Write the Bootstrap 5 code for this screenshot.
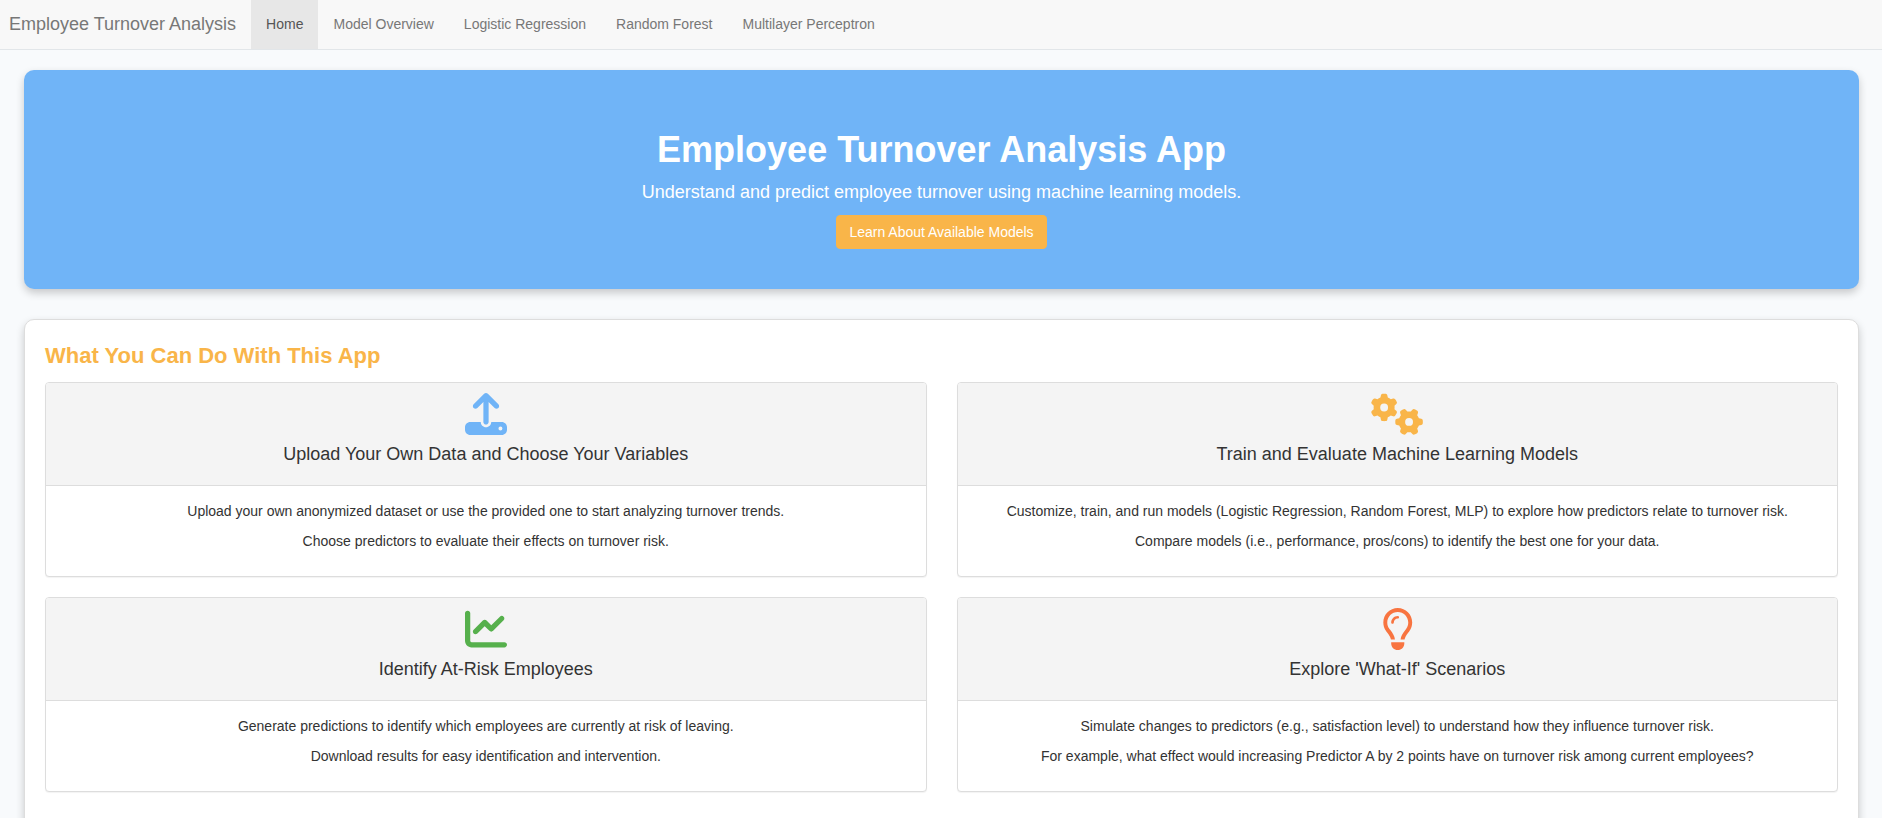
<!DOCTYPE html>
<html lang="en">
<head>
<meta charset="utf-8">
<meta name="viewport" content="width=device-width, initial-scale=1">
<title>Employee Turnover Analysis</title>
<link href="https://cdn.jsdelivr.net/npm/bootstrap@5.3.0/dist/css/bootstrap.min.css" rel="stylesheet">
<style>
  body { font-family: "Liberation Sans", Arial, sans-serif; font-size: 14px; line-height: 20px; color: #333; background: #f8fafc; }
  .topbar { background: #f8f8f8; border-bottom: 1px solid #e2e6e9; }
  .topbar .navbar-brand { font-size: 18px; line-height: 20px; color: #777; padding: 14px 15px 15px 9px; margin: 0; }
  .topbar .navbar-nav .nav-link { color: #777; padding: 14px 15px 15px; }
  .topbar .navbar-nav .nav-link.active { color: #555; background: #e7e7e7; }
  .page { padding: 20px 23px 20px 24px; }
  .hero { background: #70b4f7; border-radius: 10px; padding: 60px 20px 40px; margin-bottom: 30px; box-shadow: 0 4px 8px rgba(0,0,0,.2); }
  .hero h1 { font-size: 36px; line-height: 40px; font-weight: 700; margin-bottom: 10px; }
  .hero p { font-size: 18px; line-height: 25px; margin-bottom: 10px; }
  .btn-models { --bs-btn-font-size: 14px; --bs-btn-line-height: 20px; --bs-btn-padding-x: 12px; --bs-btn-border-radius: 4px; --bs-btn-color: #fff; --bs-btn-bg: #f9b549; --bs-btn-border-color: #f9b549; --bs-btn-hover-color: #fff; --bs-btn-hover-bg: #eba231; --bs-btn-hover-border-color: #eba231; }
  .features { border: 1px solid #ddd; border-radius: 10px; padding: 20px 20px 40px; box-shadow: 0 4px 8px rgba(0,0,0,.2); }
  .features h2 { font-size: 22px; line-height: 32px; font-weight: 700; color: #f9b549; margin-bottom: 10px; }
  .feature-row { --bs-gutter-x: 30px; --bs-gutter-y: 20px; }
  .feature { --bs-card-border-color: #ddd; --bs-card-border-radius: 4px; --bs-card-inner-border-radius: 3px; --bs-card-cap-bg: #f4f4f4; --bs-card-cap-padding-y: 10px; --bs-card-cap-padding-x: 15px; --bs-card-spacer-y: 15px; --bs-card-spacer-x: 15px; --bs-card-color: #333; box-shadow: 0 1px 1px rgba(0,0,0,.05); }
  .feature svg { height: 42px; fill: currentColor; }
  .feature h3 { font-size: 18px; line-height: 18px; font-weight: 400; margin: 10px 0 12px; color: #333; }
  .feature p { margin-bottom: 10px; }
  .tone-blue { color: #70b4f7; }
  .tone-amber { color: #f9b549; }
  .tone-green { color: #56b04c; }
  .tone-orange { color: #f87440; }
</style>
</head>
<body>
<nav class="navbar navbar-expand-md topbar p-0" aria-label="Main">
  <a class="navbar-brand" href="#">Employee Turnover Analysis</a>
  <div class="navbar-nav flex-row flex-wrap">
    <a class="nav-link active" aria-current="page" href="#">Home</a>
    <a class="nav-link" href="#models">Model Overview</a>
    <a class="nav-link" href="#logistic">Logistic Regression</a>
    <a class="nav-link" href="#forest">Random Forest</a>
    <a class="nav-link" href="#mlp">Multilayer Perceptron</a>
  </div>
</nav>

<main class="page">
  <header class="hero text-center text-white">
    <h1>Employee Turnover Analysis App</h1>
    <p>Understand and predict employee turnover using machine learning models.</p>
    <button type="button" class="btn btn-models">Learn About Available Models</button>
  </header>

  <section class="features bg-white">
    <h2>What You Can Do With This App</h2>
    <div class="row feature-row">
      <div class="col-md-6">
        <article class="card feature text-center">
          <div class="card-header">
            <svg class="d-block mx-auto tone-blue" viewBox="0 0 512 512" aria-hidden="true"><path d="M288 109.3V352c0 17.7-14.3 32-32 32s-32-14.3-32-32V109.3l-73.4 73.4c-12.5 12.5-32.8 12.5-45.3 0s-12.5-32.8 0-45.3l128-128c12.5-12.5 32.8-12.5 45.3 0l128 128c12.5 12.5 12.5 32.8 0 45.3s-32.8 12.5-45.3 0L288 109.3zM64 352H192c0 35.3 28.7 64 64 64s64-28.7 64-64H448c35.3 0 64 28.7 64 64v32c0 35.3-28.7 64-64 64H64c-35.3 0-64-28.7-64-64V416c0-35.3 28.7-64 64-64zM432 456a24 24 0 1 0 0-48 24 24 0 1 0 0 48z"/></svg>
            <h3>Upload Your Own Data and Choose Your Variables</h3>
          </div>
          <div class="card-body">
            <p>Upload your own anonymized dataset or use the provided one to start analyzing turnover trends.</p>
            <p>Choose predictors to evaluate their effects on turnover risk.</p>
          </div>
        </article>
      </div>
      <div class="col-md-6">
        <article class="card feature text-center">
          <div class="card-header">
            <svg class="d-block mx-auto tone-amber" viewBox="0 0 640 512" aria-hidden="true"><path d="M308.5 135.3c7.1-6.3 9.9-16.2 6.2-25c-2.3-5.3-4.8-10.5-7.6-15.5L304 89.4c-3-5-6.3-9.9-9.8-14.6c-5.7-7.6-15.7-10.1-24.7-7.1l-28.2 9.3c-10.7-8.8-23-16-36.2-20.9L199 27.1c-1.9-9.3-9.1-16.7-18.5-17.8C173.9 8.4 167.2 8 160.4 8h-.7c-6.8 0-13.5 .4-20.1 1.2c-9.4 1.1-16.6 8.6-18.5 17.8L115 56.1c-13.3 5-25.5 12.1-36.2 20.9L50.5 67.8c-9-3-19-.5-24.7 7.1c-3.5 4.7-6.8 9.6-9.9 14.6l-3 5.3c-2.8 5-5.3 10.2-7.6 15.6c-3.7 8.7-.9 18.6 6.2 25l22.2 19.8C32.6 161.9 32 168.9 32 176s.6 14.1 1.7 20.9L11.5 216.7c-7.1 6.3-9.9 16.2-6.2 25c2.3 5.3 4.8 10.5 7.6 15.6l3 5.2c3 5.1 6.3 9.9 9.9 14.6c5.7 7.6 15.7 10.1 24.7 7.1l28.2-9.3c10.7 8.8 23 16 36.2 20.9l6.1 29.1c1.9 9.3 9.1 16.7 18.5 17.8c6.7 .8 13.5 1.2 20.4 1.2s13.7-.4 20.4-1.2c9.4-1.1 16.6-8.6 18.5-17.8l6.1-29.1c13.3-5 25.5-12.1 36.2-20.9l28.2 9.3c9 3 19 .5 24.7-7.1c3.5-4.7 6.8-9.5 9.8-14.6l3.1-5.4c2.8-5 5.3-10.2 7.6-15.5c3.7-8.7 .9-18.6-6.2-25l-22.2-19.8c1.1-6.8 1.7-13.8 1.7-20.9s-.6-14.1-1.7-20.9l22.2-19.8zM112 176a48 48 0 1 1 96 0 48 48 0 1 1 -96 0z"/><path d="M504.7 500.5c6.3 7.1 16.2 9.9 25 6.2c5.3-2.3 10.5-4.8 15.5-7.6l5.4-3.1c5-3 9.9-6.3 14.6-9.8c7.6-5.7 10.1-15.7 7.1-24.7l-9.3-28.2c8.8-10.7 16-23 20.9-36.2l29.1-6.1c9.3-1.9 16.7-9.1 17.8-18.5c.8-6.7 1.2-13.5 1.2-20.4s-.4-13.7-1.2-20.4c-1.1-9.4-8.6-16.6-17.8-18.5L583.9 307c-5-13.3-12.1-25.5-20.9-36.2l9.3-28.2c3-9 .5-19-7.1-24.7c-4.7-3.5-9.6-6.8-14.6-9.9l-5.3-3c-5-2.8-10.2-5.3-15.6-7.6c-8.7-3.7-18.6-.9-25 6.2l-19.8 22.2c-6.8-1.1-13.8-1.7-20.9-1.7s-14.1 .6-20.9 1.7l-19.8-22.2c-6.3-7.1-16.2-9.9-25-6.2c-5.3 2.3-10.5 4.8-15.6 7.6l-5.2 3c-5.1 3-9.9 6.3-14.6 9.9c-7.6 5.7-10.1 15.7-7.1 24.7l9.3 28.2c-8.8 10.7-16 23-20.9 36.2L315.1 313c-9.3 1.9-16.7 9.1-17.8 18.5c-.8 6.7-1.2 13.5-1.2 20.4s.4 13.7 1.2 20.4c1.1 9.4 8.6 16.6 17.8 18.5l29.1 6.1c5 13.3 12.1 25.5 20.9 36.2l-9.3 28.2c-3 9-.5 19 7.1 24.7c4.7 3.5 9.5 6.8 14.6 9.8l5.4 3.1c5 2.8 10.2 5.3 15.5 7.6c8.7 3.7 18.6 .9 25-6.2l19.8-22.2c6.8 1.1 13.8 1.7 20.9 1.7s14.1-.6 20.9-1.7l19.8 22.2zM464 304a48 48 0 1 1 0 96 48 48 0 1 1 0-96z"/></svg>
            <h3>Train and Evaluate Machine Learning Models</h3>
          </div>
          <div class="card-body">
            <p>Customize, train, and run models (Logistic Regression, Random Forest, MLP) to explore how predictors relate to turnover risk.</p>
            <p>Compare models (i.e., performance, pros/cons) to identify the best one for your data.</p>
          </div>
        </article>
      </div>
      <div class="col-md-6">
        <article class="card feature text-center">
          <div class="card-header">
            <svg class="d-block mx-auto tone-green" viewBox="0 0 512 512" aria-hidden="true"><path d="M64 64c0-17.7-14.3-32-32-32S0 46.3 0 64V400c0 44.2 35.8 80 80 80H480c17.7 0 32-14.3 32-32s-14.3-32-32-32H80c-8.8 0-16-7.2-16-16V64zm406.6 86.6c12.5-12.5 12.5-32.8 0-45.3s-32.8-12.5-45.3 0L320 210.7l-57.4-57.4c-12.5-12.5-32.8-12.5-45.3 0l-112 112c-12.5 12.5-12.5 32.8 0 45.3s32.8 12.5 45.3 0L240 221.3l57.4 57.4c12.5 12.5 32.8 12.5 45.3 0l128-128z"/></svg>
            <h3>Identify At-Risk Employees</h3>
          </div>
          <div class="card-body">
            <p>Generate predictions to identify which employees are currently at risk of leaving.</p>
            <p>Download results for easy identification and intervention.</p>
          </div>
        </article>
      </div>
      <div class="col-md-6">
        <article class="card feature text-center">
          <div class="card-header">
            <svg class="d-block mx-auto tone-orange" viewBox="0 0 384 512" aria-hidden="true"><path d="M297.2 248.9C311.6 228.3 320 203.2 320 176c0-70.7-57.3-128-128-128S64 105.3 64 176c0 27.2 8.4 52.3 22.8 72.9c3.7 5.3 8.1 11.3 12.8 17.7c12.9 17.7 28.3 38.9 39.8 59.8c10.4 19 15.7 38.8 18.3 57.5H109c-2.2-12-5.9-23.7-11.8-34.5c-9.9-18-22.2-34.9-34.5-51.8c-5.2-7.1-10.4-14.2-15.4-21.4C27.6 247.9 16 213.3 16 176C16 78.8 94.8 0 192 0s176 78.8 176 176c0 37.3-11.6 71.9-31.4 100.3c-5 7.2-10.2 14.3-15.4 21.4c-12.3 16.8-24.6 33.7-34.5 51.8c-5.9 10.8-9.6 22.5-11.8 34.5H226.4c2.6-18.7 7.9-38.6 18.3-57.5c11.5-20.9 26.9-42.1 39.8-59.8c4.7-6.4 9-12.4 12.7-17.7zM192 128c-26.5 0-48 21.5-48 48c0 8.8-7.2 16-16 16s-16-7.2-16-16c0-44.2 35.8-80 80-80c8.8 0 16 7.2 16 16s-7.2 16-16 16zm0 384c-44.2 0-80-35.8-80-80V416H272v16c0 44.2-35.8 80-80 80z"/></svg>
            <h3>Explore 'What-If' Scenarios</h3>
          </div>
          <div class="card-body">
            <p>Simulate changes to predictors (e.g., satisfaction level) to understand how they influence turnover risk.</p>
            <p>For example, what effect would increasing Predictor A by 2 points have on turnover risk among current employees?</p>
          </div>
        </article>
      </div>
    </div>
  </section>
</main>
<script src="https://cdn.jsdelivr.net/npm/bootstrap@5.3.0/dist/js/bootstrap.bundle.min.js"></script>
</body>
</html>
